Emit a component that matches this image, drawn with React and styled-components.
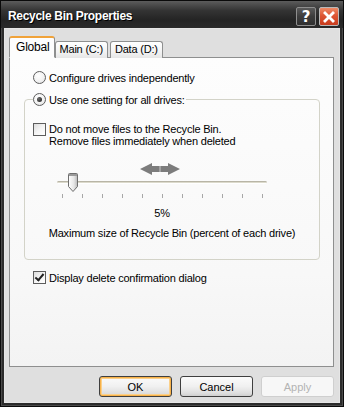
import React from "react";
import styled, { createGlobalStyle } from "styled-components";

const GlobalStyle = createGlobalStyle`
  body {
    margin: 0;
    background: #ffffff;
    font-family: "Liberation Sans", Arial, sans-serif;
    font-size: 11px;
    letter-spacing: -0.2px;
    color: #000000;
  }
`;

const TICKS = Array.from({ length: 11 }, (_, i) => i);
const SLIDER_VALUE = 5;

const App = () => {
  return (
    <>
      <GlobalStyle />
      <Window>
        <TitleBar>
          <Title>Recycle Bin Properties</Title>
          <CaptionButtons>
            <CaptionButton>?</CaptionButton>
            <CaptionButton $close>
              <svg width="12" height="12" viewBox="0 0 12 12">
                <path
                  d="M2 2 L10 10 M10 2 L2 10"
                  stroke="#ffffff"
                  strokeWidth="2.8"
                  strokeLinecap="square"
                />
              </svg>
            </CaptionButton>
          </CaptionButtons>
        </TitleBar>

        <Client>
          <TabRow>
            <Tab $active>Global</Tab>
            <Tab>Main (C:)</Tab>
            <Tab>Data (D:)</Tab>
          </TabRow>

          <Panel>
            <OptionRow>
              <Radio />
              <span>Configure drives independently</span>
            </OptionRow>

            <GroupBox>
              <Legend>
                <Radio $checked />
                <span>Use one setting for all drives:</span>
              </Legend>

              <CheckRow>
                <CheckBox />
                <span>
                  Do not move files to the Recycle Bin.
                  <br />
                  Remove files immediately when deleted
                </span>
              </CheckRow>

              <SliderBlock>
                <ArrowHint width="40" height="12" viewBox="0 0 40 12">
                  <polygon
                    points="0,6 12,0 12,3 28,3 28,0 40,6 28,12 28,9 12,9 12,12"
                    fill="#7c7c7c"
                  />
                  <line x1="20" y1="3" x2="20" y2="9" stroke="#c9c9c9" strokeWidth="1" />
                </ArrowHint>
                <Slider>
                  <Track />
                  <Thumb
                    style={{ left: `${5 + SLIDER_VALUE * 2 - 5.5}px` }}
                    width="12"
                    height="20"
                    viewBox="0 0 12 20"
                  >
                    <defs>
                      <linearGradient id="thumbFill" x1="0" x2="1" y1="0" y2="0">
                        <stop offset="0" stopColor="#ffffff" />
                        <stop offset="0.6" stopColor="#e6e6e6" />
                        <stop offset="1" stopColor="#b8b8b8" />
                      </linearGradient>
                    </defs>
                    <path
                      d="M1.5 1.5 Q1.5 0.5 2.5 0.5 L9.5 0.5 Q10.5 0.5 10.5 1.5 L10.5 13.5 L6 18.5 L1.5 13.5 Z"
                      fill="url(#thumbFill)"
                      stroke="#6e6e6e"
                    />
                    <rect x="2" y="1" width="8" height="2" fill="#9a9a9a" />
                  </Thumb>
                  <TickRow>
                    {TICKS.map((t) => (
                      <Tick key={t} />
                    ))}
                  </TickRow>
                </Slider>
                <Percent>{SLIDER_VALUE}%</Percent>
              </SliderBlock>

              <Caption>Maximum size of Recycle Bin (percent of each drive)</Caption>
            </GroupBox>

            <OptionRow $spaced>
              <CheckBox $checked />
              <span>Display delete confirmation dialog</span>
            </OptionRow>
          </Panel>

          <ButtonRow>
            <PushButton $default>OK</PushButton>
            <PushButton>Cancel</PushButton>
            <PushButton disabled>Apply</PushButton>
          </ButtonRow>
        </Client>
      </Window>
    </>
  );
};

export default App;

const Window = styled.div`
  width: 344px;
  height: 407px;
  box-sizing: border-box;
  display: flex;
  flex-direction: column;
  background: #2c2c2c;
  border: 1px solid #0a0a0a;
  padding: 0 3px 3px 3px;
  box-shadow: inset 1px 0 0 #4a4a4a, inset -1px 0 0 #4a4a4a,
    inset 0 -1px 0 #4a4a4a;
`;

const TitleBar = styled.div`
  height: 27px;
  margin: 0 -3px;
  padding: 0 4px 0 7px;
  display: flex;
  align-items: center;
  justify-content: space-between;
  background: linear-gradient(#5c5c5c 0%, #343434 35%, #242424 70%, #2a2a2a 100%);
`;

const Title = styled.div`
  color: #ffffff;
  font-weight: bold;
  font-size: 12px;
  letter-spacing: -0.3px;
  text-shadow: 1px 1px 0 #000000;
  margin-top: 2px;
`;

const CaptionButtons = styled.div`
  display: flex;
  gap: 3px;
  margin-top: 4px;
`;

const CaptionButton = styled.div`
  width: 20px;
  height: 19px;
  box-sizing: border-box;
  display: flex;
  align-items: center;
  justify-content: center;
  border: 1px solid ${(p) => (p.$close ? "#b9b9b9" : "#8e8e8e")};
  border-radius: 2px;
  color: #ffffff;
  font-family: "DejaVu Sans", sans-serif;
  font-weight: bold;
  font-size: 15px;
  background: ${(p) =>
    p.$close
      ? "linear-gradient(#ee8a66 0%, #dd5533 45%, #c83c1e 100%)"
      : "linear-gradient(#5a5a5a 0%, #3c3c3c 50%, #303030 100%)"};
`;

const Client = styled.div`
  flex: 1;
  display: flex;
  flex-direction: column;
  background: #dfdfdf;
  padding: 8px 6px 0 5px;
  box-shadow: inset 0 0 0 1px #e6e6e6;
`;

const TabRow = styled.div`
  display: flex;
  align-items: flex-end;
  margin-bottom: -1px;
  position: relative;
  z-index: 1;
`;

const Tab = styled.div`
  box-sizing: border-box;
  height: ${(p) => (p.$active ? "22px" : "17px")};
  padding: ${(p) => (p.$active ? "3px 4px 0 6px" : "1px 4px 0 4px")};
  margin-right: ${(p) => (p.$active ? "0" : "2px")};
  border: 1px solid #8e8f8f;
  border-top: ${(p) => (p.$active ? "2px solid #f0a239" : "1px solid #8e8f8f")};
  border-bottom: ${(p) => (p.$active ? "1px solid #fdfdfd" : "none")};
  border-radius: 3px 3px 0 0;
  background: ${(p) =>
    p.$active ? "#fdfdfd" : "linear-gradient(#ffffff 0%, #f3f3f3 60%, #e6e6e6 100%)"};
  font-size: ${(p) => (p.$active ? "12px" : "11px")};
  line-height: 13px;
  white-space: nowrap;
`;

const Panel = styled.div`
  width: 325px;
  height: 310px;
  box-sizing: border-box;
  border: 1px solid #8e8f8f;
  background: linear-gradient(#fdfdfd 0%, #f8f8f8 70%, #f3f3f3 100%);
  padding: 13px 0 0 23px;
  display: flex;
  flex-direction: column;
`;

const OptionRow = styled.div`
  display: flex;
  align-items: center;
  gap: 3px;
  height: 13px;
  margin-top: ${(p) => (p.$spaced ? "11px" : "0")};
  margin-bottom: ${(p) => (p.$spaced ? "0" : "9px")};
`;

const Radio = styled.span`
  width: 13px;
  height: 13px;
  box-sizing: border-box;
  border-radius: 50%;
  border: 1px solid #5d5d5d;
  background: radial-gradient(circle at 40% 35%, #ffffff 0%, #f2f2f2 55%, #d9d9d9 100%);
  display: flex;
  align-items: center;
  justify-content: center;
  flex: none;

  &::after {
    content: "";
    display: ${(p) => (p.$checked ? "block" : "none")};
    width: 5px;
    height: 5px;
    border-radius: 50%;
    background: radial-gradient(circle at 35% 35%, #6a6a6a, #1c1c1c);
  }
`;

const GroupBox = styled.fieldset`
  width: 296px;
  box-sizing: border-box;
  margin: 0 0 0 -9px;
  padding: 0 0 19px 0;
  border: 1px solid #d3d3c8;
  border-radius: 4px;
  display: flex;
  flex-direction: column;
`;

const Legend = styled.legend`
  display: flex;
  align-items: center;
  gap: 3px;
  margin-left: 8px;
  padding: 0 1px 0 0;
  height: 13px;
`;

const CheckRow = styled.div`
  display: flex;
  align-items: flex-start;
  gap: 3px;
  margin: 17px 0 0 8px;
  line-height: 12px;
`;

const CheckBox = styled.span`
  width: 13px;
  height: 13px;
  box-sizing: border-box;
  border: 1px solid #5d5d5d;
  background: linear-gradient(135deg, #dcdcdc 0%, #f4f4f4 50%, #ffffff 100%);
  flex: none;
  position: relative;

  &::after {
    content: "";
    display: ${(p) => (p.$checked ? "block" : "none")};
    position: absolute;
    left: 3px;
    top: 0px;
    width: 3px;
    height: 7px;
    border-right: 2px solid #222222;
    border-bottom: 2px solid #222222;
    transform: rotate(40deg);
  }
`;

const SliderBlock = styled.div`
  width: 210px;
  margin: 16px 0 0 32px;
  display: flex;
  flex-direction: column;
  align-items: center;
`;

const ArrowHint = styled.svg`
  display: block;
  margin-left: -5px;
  margin-bottom: -2px;
`;

const Slider = styled.div`
  position: relative;
  width: 210px;
  height: 26px;
`;

const Track = styled.div`
  margin-top: 8px;
  height: 1px;
  border-top: 1px solid #b8b5a6;
  border-bottom: 1px solid #ffffff;
  background: #dcdacc;
  border-radius: 2px;
`;

const Thumb = styled.svg`
  position: absolute;
  top: 0;
`;

const TickRow = styled.div`
  display: flex;
  justify-content: space-between;
  padding: 0 4px 0 5px;
  margin-top: 10px;
`;

const Tick = styled.span`
  width: 1px;
  height: 4px;
  background: #a7a7a7;
`;

const Percent = styled.div`
  margin-top: 8px;
  line-height: 13px;
`;

const Caption = styled.div`
  margin-top: 7px;
  line-height: 13px;
  text-align: center;
`;

const ButtonRow = styled.div`
  display: flex;
  justify-content: flex-end;
  gap: 8px;
  margin-top: 9px;
`;

const PushButton = styled.button`
  width: 73px;
  height: 21px;
  box-sizing: border-box;
  padding: 0;
  font-family: "Liberation Sans", Arial, sans-serif;
  font-size: 11px;
  color: ${(p) => (p.disabled ? "#b3b3b3" : "#000000")};
  border: 1px solid ${(p) => (p.disabled ? "#cfcfcf" : "#3f3f3f")};
  border-radius: 3px;
  background: ${(p) =>
    p.disabled
      ? "#f7f7f7"
      : "linear-gradient(#fbfbfb 0%, #f0f0f0 50%, #dedede 85%, #cfcfcf 100%)"};
  box-shadow: ${(p) =>
    p.$default ? "inset 0 0 0 1px #f7b24a, inset 0 0 0 2px #fbd08a" : "none"};
`;
